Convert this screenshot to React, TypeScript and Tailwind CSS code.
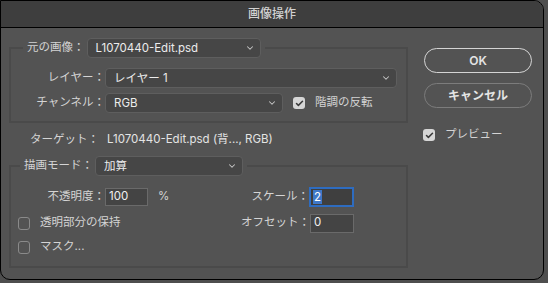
import { ChevronDown, Check } from "lucide-react";

const font = { fontFamily: '"Inter", "Noto Sans CJK JP", sans-serif' };

const Select = ({ value, className }: { value: string; className?: string }) => (
  <div className={`flex items-center h-[20px] rounded-[4px] bg-[#464646] border border-[#5e5e5e] pl-[8px] pr-[5px] text-[#ececec] ${className ?? ""}`}>
    <span className="flex-1 whitespace-nowrap leading-[16px]">{value}</span>
    <ChevronDown size={10} strokeWidth={2.5} className="text-[#c8c8c8]" />
  </div>
);

const Box = ({ checked }: { checked?: boolean }) =>
  checked ? (
    <span className="flex items-center justify-center w-[12px] h-[12px] rounded-[3px] bg-[#d6d6d6]">
      <Check size={9} strokeWidth={4} className="text-[#3a3a3a]" />
    </span>
  ) : (
    <span className="w-[12px] h-[13px] rounded-[3px] border border-[#8a8a8a]" />
  );

const Field = ({ value, className }: { value: string; className?: string }) => (
  <div className={`flex items-center h-[18px] bg-[#444444] border border-[#6a6a6a] pl-[3px] text-[#f0f0f0] ${className ?? ""}`}>
    {value}
  </div>
);

export default function App() {
  return (
    <div className="w-[548px] h-[283px] bg-[#4e4e4e] text-[11.5px] leading-none" style={font}>
      <div className="w-[544px] h-[280px] flex flex-col bg-[#535353] border border-black rounded-tr-[10px] rounded-b-[10px] overflow-hidden">
        {/* title */}
        <div className="h-[27px] shrink-0 flex items-center justify-center bg-[#3e3e3e] border-b border-black text-[#d2d2d2] text-[12px] font-medium">
          画像操作
        </div>

        <div className="flex pl-[8px] pt-[10px]">
          {/* left column */}
          <div className="w-[399px] flex flex-col">
            <fieldset className="border-2 border-[#4a4a4a] pl-[12px] pr-[8px] pb-[8px] text-[#d4d4d4]">
              <legend className="flex items-center px-[4px]">
                <span>元の画像：</span>
                <Select value="L1070440-Edit.psd" className="w-[174px] ml-[2px]" />
              </legend>
              <div className="flex items-center mt-[10px] -ml-[12px]">
                <span className="w-[94px] text-right">レイヤー：</span>
                <Select value="レイヤー 1" className="w-[292px]" />
              </div>
              <div className="flex items-center mt-[5px] -ml-[12px]">
                <span className="w-[94px] text-right">チャンネル：</span>
                <Select value="RGB" className="w-[178px]" />
                <span className="ml-[10px]"><Box checked /></span>
                <span className="ml-[10px]">階調の反転</span>
              </div>
            </fieldset>

            <div className="flex items-center h-[20px] mt-[7px] text-[#d4d4d4]">
              <span className="w-[90px] text-right">ターゲット：</span>
              <span className="ml-[8px] text-[#e4e4e4]">L1070440-Edit.psd (背..., RGB)</span>
            </div>

            <fieldset className="mt-[6px] border-2 border-[#4a4a4a] pl-[12px] pb-[9px] text-[#d4d4d4]">
              <legend className="flex items-center px-[4px] -ml-[3px]">
                <span>描画モード：</span>
                <Select value="加算" className="w-[148px] ml-[2px]" />
              </legend>
              <div className="flex items-center h-[20px] mt-[11px] -ml-[12px]">
                <div className="w-[198px] flex items-center">
                  <span className="w-[94px] text-right">不透明度：</span>
                  <Field value="100" className="w-[43px]" />
                  <span className="ml-[10px]">%</span>
                </div>
                <span className="w-[100px] text-right">スケール：</span>
                <div className="flex items-center h-[20px] w-[45px] bg-[#3f3f3f] border-2 border-[#2e6cc0] pl-[2px]">
                  <span className="bg-[#3f78c8] text-white px-[1px] leading-[14px]">2</span>
                </div>
              </div>
              <div className="flex items-center h-[20px] mt-[6px] -ml-[12px]">
                <div className="w-[198px] flex items-center pl-[7px]">
                  <Box />
                  <span className="ml-[10px]">透明部分の保持</span>
                </div>
                <span className="w-[101px] text-right">オフセット：</span>
                <Field value="0" className="w-[44px] h-[19px]" />
              </div>
              <div className="flex items-center h-[20px] mt-[4px] -ml-[5px]">
                <Box />
                <span className="ml-[10px]">マスク...</span>
              </div>
            </fieldset>
          </div>

          {/* right column */}
          <div className="flex flex-col ml-[16px] pt-[10px] text-[#e4e4e4]">
            <button className="w-[108px] h-[25px] rounded-full border-[1.5px] border-[#d4d4d4] text-[12px] font-semibold">OK</button>
            <button className="w-[108px] h-[25px] mt-[10px] rounded-full border border-[#7c7c7c] text-[12px] font-semibold">キャンセル</button>
            <div className="flex items-center mt-[21px] -ml-[1px]">
              <Box checked />
              <span className="ml-[10px] text-[#d4d4d4]">プレビュー</span>
            </div>
          </div>
        </div>
      </div>
    </div>
  );
}
